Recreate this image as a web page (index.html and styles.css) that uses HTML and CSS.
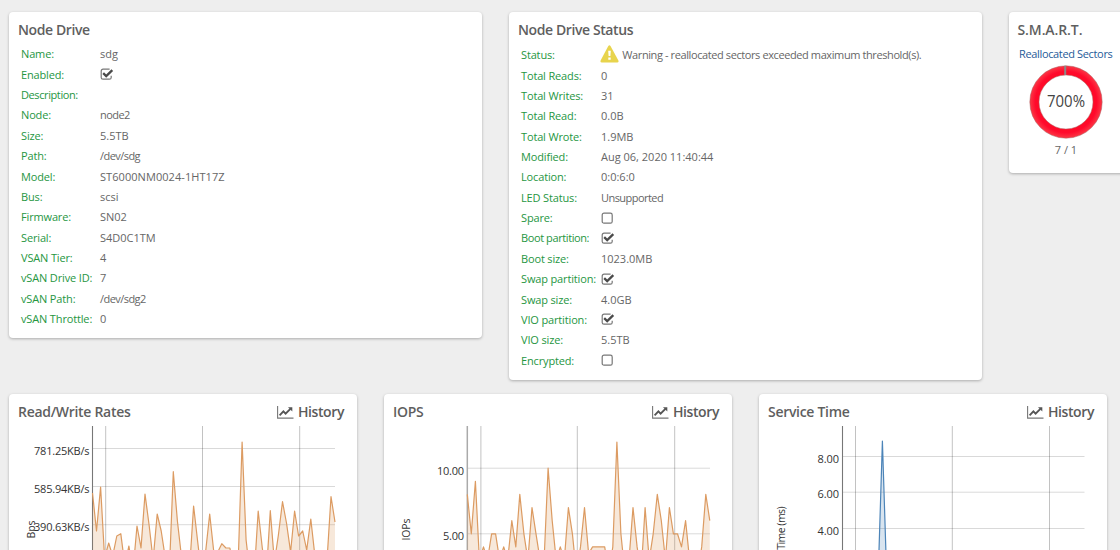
FILE: index.html
```html
<!DOCTYPE html>
<html lang="en">
<head>
<meta charset="utf-8">
<title>Node Drive</title>
<link rel="stylesheet" href="styles.css">
</head>
<body>
<svg class="defs" width="0" height="0" aria-hidden="true">
  <symbol id="box" viewBox="0 0 14 13"><rect x="1.2" y="1.2" width="10" height="10" rx="1.8" fill="none" stroke="#777" stroke-width="1.2"/></symbol>
  <symbol id="checked" viewBox="0 0 14 13"><path d="M11.2 7.8V9.4a1.8 1.8 0 0 1-1.8 1.8H3a1.8 1.8 0 0 1-1.8-1.8V3A1.8 1.8 0 0 1 3 1.2H9.6" fill="none" stroke="#777" stroke-width="1.2"/><path d="M3.2 5.2 6.2 8.1 12.3 2.1" fill="none" stroke="#4a4a4a" stroke-width="2.3"/></symbol>
  <symbol id="chart" viewBox="0 0 17 13"><path d="M.6 0V12.1H16.5" fill="none" stroke="#777" stroke-width="1.1"/><path d="M2.6 9.3 6.4 5.4 8.6 7.6 13.4 2.8" fill="none" stroke="#555" stroke-width="1.9"/><path d="M11 1.2H15.3V5.5Z" fill="#555"/></symbol>
</svg>
<main class="page">
  <div class="row info">
    <section class="card">
      <h2>Node Drive</h2>
      <dl>
        <dt>Name:</dt><dd>sdg</dd>
        <dt>Enabled:</dt><dd><svg class="check"><use href="#checked"/></svg></dd>
        <dt class="snug">Description:</dt><dd></dd>
        <dt>Node:</dt><dd class="snug">node2</dd>
        <dt>Size:</dt><dd>5.5TB</dd>
        <dt>Path:</dt><dd class="snug">/dev/sdg</dd>
        <dt>Model:</dt><dd class="wide">ST6000NM0024-1HT17Z</dd>
        <dt>Bus:</dt><dd>scsi</dd>
        <dt>Firmware:</dt><dd>SN02</dd>
        <dt>Serial:</dt><dd>S4D0C1TM</dd>
        <dt>VSAN Tier:</dt><dd>4</dd>
        <dt>vSAN Drive ID:</dt><dd>7</dd>
        <dt>vSAN Path:</dt><dd class="snug">/dev/sdg2</dd>
        <dt>vSAN Throttle:</dt><dd>0</dd>
      </dl>
    </section>
    <section class="card status">
      <h2>Node Drive Status</h2>
      <dl>
        <dt>Status:</dt><dd class="warning"><svg class="alert" viewBox="0 0 19 18"><path d="M8.3 1.1Q9.4-.5 10.5 1.1L18.4 15.6Q19 17.4 17.2 17.5H1.8Q0 17.4.6 15.6Z" fill="#e8d44d"/><path d="M8.2 5.7h2.6l-.4 5.3H8.6zM8.3 12.4h2.4v2.4H8.3z" fill="#fff"/></svg><span>Warning - reallocated sectors exceeded maximum threshold(s).</span></dd>
        <dt>Total Reads:</dt><dd>0</dd>
        <dt>Total Writes:</dt><dd>31</dd>
        <dt>Total Read:</dt><dd>0.0B</dd>
        <dt>Total Wrote:</dt><dd>1.9MB</dd>
        <dt>Modified:</dt><dd>Aug 06, 2020 11:40:44</dd>
        <dt>Location:</dt><dd>0:0:6:0</dd>
        <dt>LED Status:</dt><dd class="snug">Unsupported</dd>
        <dt>Spare:</dt><dd><svg class="check"><use href="#box"/></svg></dd>
        <dt class="snug">Boot partition:</dt><dd><svg class="check"><use href="#checked"/></svg></dd>
        <dt>Boot size:</dt><dd>1023.0MB</dd>
        <dt>Swap partition:</dt><dd><svg class="check"><use href="#checked"/></svg></dd>
        <dt>Swap size:</dt><dd>4.0GB</dd>
        <dt>VIO partition:</dt><dd><svg class="check"><use href="#checked"/></svg></dd>
        <dt>VIO size:</dt><dd>5.5TB</dd>
        <dt>Encrypted:</dt><dd><svg class="check"><use href="#box"/></svg></dd>
      </dl>
    </section>
    <section class="card smart">
      <h2>S.M.A.R.T.</h2>
      <a class="metric">Reallocated Sectors</a>
      <svg class="gauge" viewBox="0 0 74 74">
        <defs><radialGradient id="ring" gradientUnits="userSpaceOnUse" cx="37" cy="37" r="36.5"><stop offset=".74" stop-color="#ff0a26"/><stop offset=".84" stop-color="#ff0a2c"/><stop offset="1" stop-color="#fb3a47"/></radialGradient></defs>
        <circle cx="37" cy="37" r="31.6" fill="none" stroke="url(#ring)" stroke-width="9.2"/>
        <circle cx="37" cy="37" r="36.2" fill="none" stroke="#a66" stroke-width=".5"/>
        <circle cx="37" cy="37" r="27" fill="none" stroke="#a66" stroke-width=".5"/>
        <path d="M36.2.8V10" stroke="#888" stroke-width="2"/>
        <text x="37" y="42.3" text-anchor="middle" textLength="38" lengthAdjust="spacingAndGlyphs">700%</text>
      </svg>
      <div class="ratio">7 / 1</div>
    </section>
  </div>
  <div class="row charts">
    <section class="card chart">
      <header><h2>Read/Write Rates</h2><a class="history"><svg><use href="#chart"/></svg>History</a></header>
      <svg class="plot" viewBox="9 426 348 140">
        <path class="grid" d="M92.5 448.5H335M92.5 486.5H335M92.5 524.7H335"/>
        <path class="grid v" d="M105.7 426V566M202.5 426V566M299.7 426V566"/>
        <path class="axis" d="M92.5 426V566"/>
        <g id="rates"></g>
        <text x="89.5" y="455" text-anchor="end" textLength="55.5">781.25KB/s</text>
        <text x="89.5" y="493" text-anchor="end" textLength="55.5">585.94KB/s</text>
        <text x="89.5" y="531" text-anchor="end" textLength="55.5">390.63KB/s</text>
        <text class="unit" transform="translate(35 538.5) rotate(-90)" textLength="18">Bps</text>
      </svg>
    </section>
    <section class="card chart">
      <header><h2>IOPS</h2><a class="history"><svg><use href="#chart"/></svg>History</a></header>
      <svg class="plot" viewBox="384 426 348 140">
        <path class="grid" d="M467.3 468.2H710M467.3 533.8H710"/>
        <path class="grid v" d="M480.9 426V566M577.3 426V566M674.7 426V566"/>
        <path class="axis light" d="M467.3 426V566"/>
        <g id="iops"></g>
        <text x="464" y="474.5" text-anchor="end" textLength="27">10.00</text>
        <text x="464" y="540" text-anchor="end" textLength="21">5.00</text>
        <text class="unit" transform="translate(409.5 540.5) rotate(-90)" textLength="22">IOPs</text>
      </svg>
    </section>
    <section class="card chart">
      <header><h2>Service Time</h2><a class="history"><svg><use href="#chart"/></svg>History</a></header>
      <svg class="plot" viewBox="759 426 348 140">
        <path class="grid" d="M842.5 456.5H1084.5M842.5 492.2H1084.5M842.5 528.5H1084.5"/>
        <path class="grid v" d="M855.5 426V566M952.3 426V566M1049.5 426V566"/>
        <path class="axis" d="M842.5 426V566"/>
        <g id="service" class="blue"></g>
        <text x="839" y="462.5" text-anchor="end" textLength="21.5">8.00</text>
        <text x="839" y="498" text-anchor="end" textLength="21.5">6.00</text>
        <text x="839" y="534.5" text-anchor="end" textLength="21.5">4.00</text>
        <text class="unit" transform="translate(784.5 549.8) rotate(-90)" textLength="43.5">Time (ms)</text>
      </svg>
    </section>
  </div>
</main>
<script src="charts.js"></script>
</body>
</html>
```
FILE: styles.css
```css
* { box-sizing: border-box; }
body { margin: 0; width: 1120px; height: 550px; overflow: hidden; background: #eee; color: #666; font: 11px/20.4px "Open Sans", "Noto Sans", sans-serif; }
.defs { position: absolute; }
.page { width: 1120px; height: 550px; overflow: hidden; padding: 12px 0 0 9px; display: flex; flex-direction: column; gap: 14px; }
.row { display: flex; align-items: flex-start; flex: none; }
.info { height: 368px; gap: 27px; }
.card { flex: none; background: #fff; border-radius: 4px; box-shadow: 0 1px 3px rgba(0,0,0,.28); width: 473px; padding: 8px 9px 8.6px; }
h2 { margin: 0; font-size: 14px; line-height: 20px; font-weight: 600; color: #5f5f5f; white-space: nowrap; letter-spacing: -.4px; }
dl { display: grid; grid-template-columns: 79px 1fr; grid-auto-rows: 20.37px; margin: 4.4px 0 0 3px; align-items: center; }
.status dl { grid-template-columns: 80px 1fr; grid-template-rows: 21.2px; }
dt { color: #26963f; white-space: nowrap; letter-spacing: -.15px; }
dd { margin: 0; height: 20.4px; white-space: nowrap; }
dt.snug { letter-spacing: -.4px; }
dd.snug { letter-spacing: -.55px; }
dd.wide { letter-spacing: .06px; }
.check { display: block; width: 14px; height: 13px; margin: 3.6px 0 0 -.4px; }
.warning { display: flex; align-items: center; gap: 3px; letter-spacing: -.4px; }
.warning span { padding-top: 1px; }
.alert { width: 19px; height: 18px; margin: -2px 0 0 -.7px; }
.smart { width: 200px; height: 161px; margin-left: -.5px; }
.smart h2 { letter-spacing: -.1px; }
.metric { display: block; color: #1f5b99; margin: 4px 0 0 1.5px; height: 20px; letter-spacing: -.35px; }
.gauge { display: block; width: 74px; height: 74px; margin: .5px 0 0 11.3px; }
.gauge text { font: 16px "Open Sans", sans-serif; fill: #444; }
.ratio { width: 97px; text-align: center; margin-top: 1.5px; }
.charts { gap: 27px; }
.chart { width: 348px; height: 184px; padding: 8px 0 0; }
.chart header { display: flex; justify-content: space-between; padding: 0 13px 0 9px; height: 24px; }
.chart h2 { letter-spacing: -.3px; }
.history { display: flex; gap: 4px; font-size: 14px; line-height: 20px; font-weight: 600; color: #5b5b5b; letter-spacing: -.4px; }
.history svg { width: 17px; height: 13px; margin-top: 4px; }
.plot { display: block; width: 348px; height: 140px; }
.plot text { font: 11px "Open Sans", sans-serif; fill: #333; }
.plot .unit { font-size: 10.5px; }
.grid { stroke: #000; stroke-opacity: .15; fill: none; }
.grid.v { stroke-opacity: .24; }
.axis { stroke: #777; stroke-width: 1.1; }
.axis.light { stroke: #aaa; stroke-width: 1.5; }
.area { fill: #d98a44; fill-opacity: .2; }
.line { fill: none; stroke: #dc9b62; stroke-width: 1.2; stroke-linejoin: round; }
.blue .area { fill: #3a78b0; }
.blue .line { stroke: #4c84b8; }
```
FILE: charts.js
```js
// Plots one series of vertical positions at equal steps along the x axis.
function plot(id, left, values) {
  const step = 4.042;
  const points = values.map((y, i) => (left + i * step).toFixed(1) + ',' + y.toFixed(1));
  const right = left + (values.length - 1) * step;
  const line = points.join(' ');
  document.getElementById(id).innerHTML =
    `<polygon class="area" points="${left},600 ${line} ${right},600"/><polyline class="line" points="${line}"/>`;
}
plot('rates', 92.5, [493,531,487,558,543,556,536,533.7,565,546,572,526,548,494,525,560,514,531,558,572,471.7,521,556,575,570,506,541,575,551,514,552,552,543.7,548,548,572,568,442,540,575,575,511,548,575,510.7,562,535,501.7,523,552,511,536,531,550,519,555,580,580,562,496.7,522]);
const ops = [8,5,9,3,4,3,5,5,3,4,3,6,4,8,5,3,7,5,3,3,10,6,3,4,3,7,5,2,4,7,3.5,4,4,4,4,2,4,12,5,2,3,7,4,2,7,3,5,8,6,3,7,5,5,4,6,3,2,2,4,8,6];
plot('iops', 467.3, ops.map(v => 468.2 + (10 - v) * 13.12));
const service = new Array(61).fill(600);
service[9] = 570; service[10] = 441; service[11] = 570;
plot('service', 842, service);
```
